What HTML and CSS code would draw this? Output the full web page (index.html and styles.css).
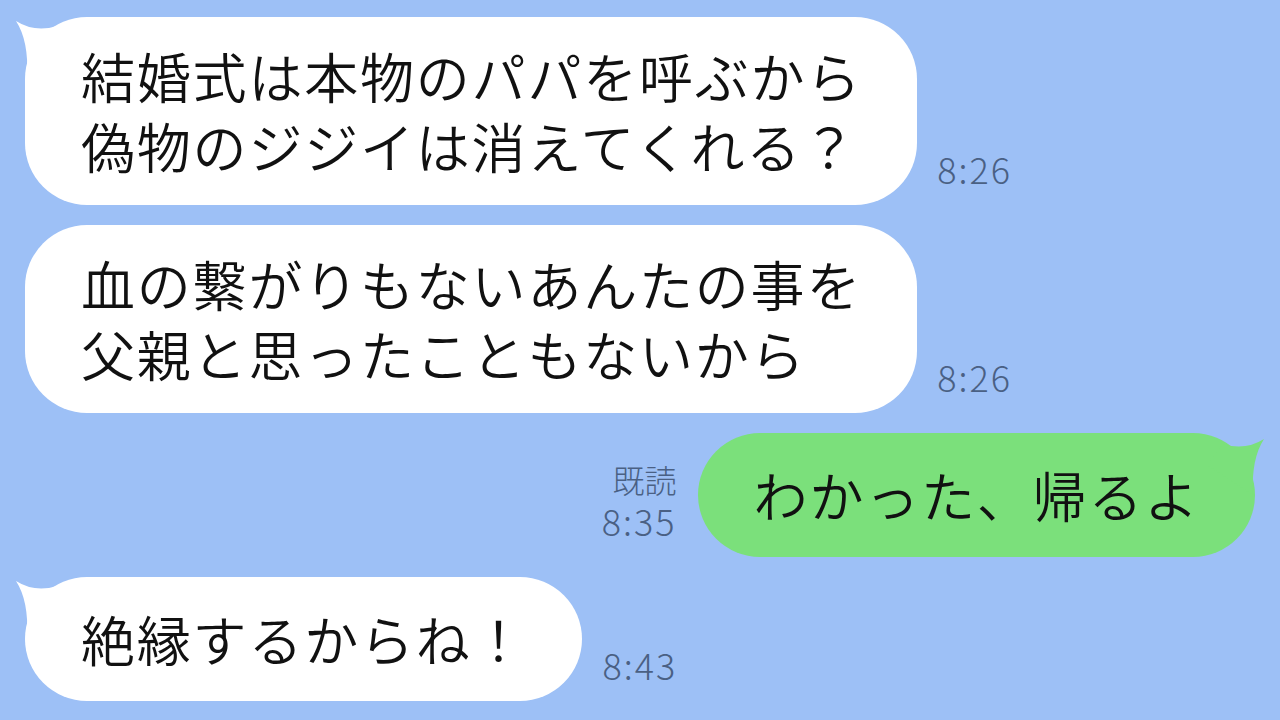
FILE: index.html
```html
<!DOCTYPE html>
<html lang="ja">
<head>
    <meta charset="UTF-8">
    <meta name="viewport" content="width=device-width, initial-scale=1.0">
    <title>トーク</title>
    <link rel="stylesheet" href="styles.css">
</head>
<body>
    <div class="chat">
        <div class="row left">
            <div class="bubble white multi">
                <svg class="tail" viewBox="0 0 60 60" width="60" height="60"><path d="M3,4 Q22,16 44,9 L60,30 L14,60 Q16,24 3,4 Z"/></svg>
                結婚式は本物のパパを呼ぶから<br>偽物のジジイは消えてくれる？
            </div>
            <div class="meta">
                <span class="time">8:26</span>
            </div>
        </div>

        <div class="row left">
            <div class="bubble white multi">
                血の繋がりもないあんたの事を<br>父親と思ったこともないから
            </div>
            <div class="meta">
                <span class="time">8:26</span>
            </div>
        </div>

        <div class="row right">
            <div class="meta">
                <span class="read">既読</span>
                <span class="time">8:35</span>
            </div>
            <div class="bubble green">
                <svg class="tail" viewBox="0 0 60 60" width="60" height="60"><path d="M3,4 Q22,16 44,9 L60,30 L14,60 Q16,24 3,4 Z"/></svg>
                わかった、帰るよ
            </div>
        </div>

        <div class="row left">
            <div class="bubble white">
                <svg class="tail" viewBox="0 0 60 60" width="60" height="60"><path d="M3,4 Q22,16 44,9 L60,30 L14,60 Q16,24 3,4 Z"/></svg>
                絶縁するからね！
            </div>
            <div class="meta">
                <span class="time">8:43</span>
            </div>
        </div>
    </div>
</body>
</html>
```

FILE: styles.css
```css
body {
    margin: 0;
    padding: 0;
    background-color: #9dc0f6;
    font-family: "Noto Sans CJK JP", "Noto Sans", sans-serif;
    width: 1280px;
    height: 720px;
    overflow: hidden;
}

.chat {
    display: flex;
    flex-direction: column;
    gap: 20px;
    padding-top: 17px;
}

.row {
    display: flex;
    align-items: flex-end;
    gap: 20px;
}
.row.left {
    padding-left: 25px;
}
.row.right {
    justify-content: flex-end;
    padding-right: 25px;
    gap: 21px;
}

.bubble {
    position: relative;
    font-size: 54px;
    font-weight: 350;
    line-height: 70px;
    letter-spacing: 1.8px;
    color: #111;
    white-space: nowrap;
    padding: 27px 55px 27px 56px;
    border-radius: 62px;
}
.bubble.multi {
    padding-top: 24px;
    padding-bottom: 24px;
}
.bubble.white {
    background-color: #ffffff;
}
.bubble.green {
    background-color: #7be07b;
}

/* tail of the speech bubble */
.tail {
    position: absolute;
    top: 0;
    left: -12px;
}
.white .tail path {
    fill: #ffffff;
}
.green .tail {
    left: auto;
    right: -12px;
    top: 2px;
    transform: scaleX(-1);
}
.green .tail path {
    fill: #7be07b;
}

.meta {
    display: flex;
    flex-direction: column;
    align-items: flex-end;
    margin-bottom: 16px;
    color: #4a6084;
    font-family: "Noto Sans CJK JP", "Noto Sans", sans-serif;
    font-weight: 300;
}
.time {
    font-size: 36px;
    line-height: 42px;
    letter-spacing: 2px;
}
.read {
    font-size: 32px;
    line-height: 40px;
}
```
